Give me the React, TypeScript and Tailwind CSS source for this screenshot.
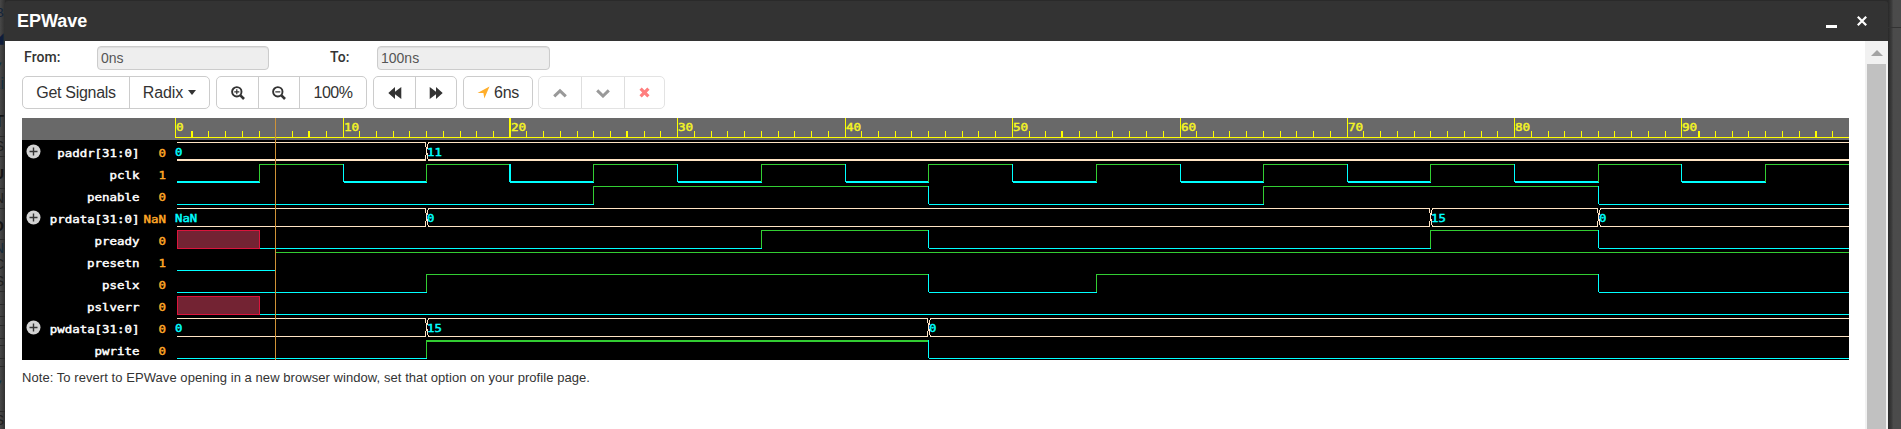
import type { ReactNode } from 'react';

const PX = 16.738;
const X0 = 153;
const WIDTH = 1827;
const snapped: Record<number, number> = { 1: 169, 8: 286, 10: 321, 20: 487, 27: 604, 53: 1039, 60: 1158 };
const wideTicks = [1, 8, 20, 27, 53, 91, 98];
const tx = (t: number) => snapped[t] ?? Math.round(X0 + t * PX);

type Seg = { from: number; to: number; v: string };
type Signal = { name: string; value: string; bus?: boolean; top: number; hh?: number; lh?: number; segs: Seg[] };

const s = (from: number, to: number, v: string): Seg => ({ from, to, v });
const clock = Array.from({ length: 20 }, (_, i) => s(i * 5, i * 5 + 5, i % 2 ? '1' : '0'));

const signals: Signal[] = [
  { name: 'paddr[31:0]', value: '0', bus: true, top: 24, lh: 2, segs: [s(0, 15, '0'), s(15, 101, '11')] },
  { name: 'pclk', value: '1', top: 46, lh: 2, segs: clock },
  { name: 'penable', value: '0', top: 68, segs: [s(0, 25, '0'), s(25, 45, '1'), s(45, 65, '0'), s(65, 85, '1'), s(85, 101, '0')] },
  { name: 'prdata[31:0]', value: 'NaN', bus: true, top: 90, segs: [s(0, 15, 'NaN'), s(15, 75, '0'), s(75, 85, '15'), s(85, 101, '0')] },
  { name: 'pready', value: '0', top: 112, segs: [s(0, 5, 'x'), s(5, 35, '0'), s(35, 45, '1'), s(45, 75, '0'), s(75, 85, '1'), s(85, 101, '0')] },
  { name: 'presetn', value: '1', top: 134, segs: [s(0, 6, '0'), s(6, 101, '1')] },
  { name: 'pselx', value: '0', top: 156, segs: [s(0, 15, '0'), s(15, 45, '1'), s(45, 55, '0'), s(55, 85, '1'), s(85, 101, '0')] },
  { name: 'pslverr', value: '0', top: 178, segs: [s(0, 5, 'x'), s(5, 101, '0')] },
  { name: 'pwdata[31:0]', value: '0', bus: true, top: 200, segs: [s(0, 15, '0'), s(15, 45, '15'), s(45, 101, '0')] },
  { name: 'pwrite', value: '0', top: 222, hh: 2, segs: [s(0, 15, '0'), s(15, 45, '1'), s(45, 101, '0')] },
];

function Label({ x, y, color, adv, end, children }: { x: number; y: number; color: string; adv: number; end?: boolean; children: string }) {
  const w = children.length * adv;
  return (
    <text x={end ? x - w : x} y={y} fill={color} stroke={color} strokeWidth={0.45} fontSize={11} textLength={w} lengthAdjust="spacingAndGlyphs">
      {children}
    </text>
  );
}

function Wave({ sig }: { sig: Signal }) {
  const lh = sig.lh ?? 1;
  const hh = sig.hh ?? 1;
  const low = sig.top + (lh === 2 ? 17 : 18);
  return (
    <g>
      {sig.segs.map((g, i) => {
        const x1 = i === 0 ? X0 + 2 : tx(g.from);
        const x2 = Math.min(tx(g.to), WIDTH);
        if (sig.bus) {
          const a = i === 0 ? x1 : x1 + 2;
          const b = x2 === WIDTH ? x2 : x2 - 1;
          return (
            <g key={i} fill="#ffe4c4">
              <rect x={a} y={sig.top} width={b - a} height={1} />
              <rect x={a} y={low} width={b - a} height={lh} />
              {i > 0 && (
                <g>
                  <rect x={x1 - 1} y={sig.top} width={1} height={5} />
                  <rect x={x1} y={sig.top + 5} width={1} height={8} />
                  <rect x={x1 - 1} y={sig.top + 13} width={1} height={6} />
                  <rect x={x1 + 2} y={sig.top} width={1} height={2} />
                  <rect x={x1 + 1} y={sig.top + 2} width={1} height={5} />
                  <rect x={x1 + 1} y={sig.top + 11} width={1} height={6} />
                  <rect x={x1 + 2} y={sig.top + 17} width={1} height={2} />
                </g>
              )}
              <Label x={i === 0 ? X0 : x1 + 1} y={sig.top + 14} color="#00ffff" adv={7.4}>{g.v}</Label>
            </g>
          );
        }
        if (g.v === 'x') {
          return (
            <g key={i}>
              <rect x={x1} y={sig.top} width={x2 - x1 + 1} height={19} fill="#dc143c" />
              <rect x={x1 + 1} y={sig.top + 1} width={x2 - x1 - 1} height={17} fill="#732333" />
            </g>
          );
        }
        const high = g.v === '1';
        const edge = i > 0 && sig.segs[i - 1].v !== 'x' && sig.name !== 'presetn';
        const after = i > 0 ? 1 : 0;
        return (
          <g key={i} fill={high ? '#32cd32' : '#00ffff'}>
            <rect x={x1 + after} y={high ? sig.top : low} width={x2 - x1 + 1 - after} height={high ? hh : lh} />
            {edge && <rect x={x1} y={sig.top} width={sig.name === 'pclk' && g.from === 20 ? 2 : 1} height={18} />}
          </g>
        );
      })}
    </g>
  );
}

function Waveform() {
  return (
    <svg width={WIDTH} height={242} className="block font-['DejaVu_Sans_Mono',monospace]" shapeRendering="crispEdges">
      <rect width={WIDTH} height={242} fill="#000" />
      <rect width={WIDTH} height={22} fill="#696969" />
      <rect x={X0} y={19} width={WIDTH - X0} height={1} fill="#ff0" />
      {Array.from({ length: 100 }, (_, i) => (
        <g key={i}>
          <rect x={tx(i)} y={i % 10 ? 13 : 0} width={wideTicks.includes(i) ? 2 : 1} height={i % 10 ? 6 : 20} fill="#ff0" />
          {i % 10 === 0 && <Label x={tx(i) + (i === 20 ? 2 : 1)} y={13} color="#f4f425" adv={7.6}>{String(i)}</Label>}
        </g>
      ))}
      {signals.map((sig) => (
        <g key={sig.name}>
          <Wave sig={sig} />
          {sig.bus && (
            <g shapeRendering="auto">
              <circle cx={11.5} cy={sig.top + 9.5} r={7} fill="#d3d3d3" />
              <path d={`M7.5 ${sig.top + 9.5}h8M11.5 ${sig.top + 5.5}v8`} stroke="#333" strokeWidth={1.4} />
            </g>
          )}
          <Label x={117.5} y={sig.top + 15} color="#fff" adv={7.48} end>{sig.name}</Label>
          <Label x={144} y={sig.top + 15} color="#ffa727" adv={7.48} end>{sig.value}</Label>
        </g>
      ))}
      <rect x={253} y={0} width={1} height={242} fill="#cf9236" />
    </svg>
  );
}

function Group({ children, className }: { children: ReactNode; className: string }) {
  return <div className={`flex h-[33px] divide-x overflow-hidden rounded-[5px] border ${className}`}>{children}</div>;
}

function Btn({ children, className }: { children: ReactNode; className: string }) {
  return <button type="button" className={`flex items-center justify-center ${className}`}>{children}</button>;
}

function Magnifier({ plus }: { plus?: boolean }) {
  return (
    <svg width="14" height="14" viewBox="0 0 14 14" fill="none" stroke="#333">
      <circle cx="5.8" cy="5.8" r="4.7" strokeWidth="1.9" />
      <path d="M9.4 9.4l3.6 3.6" strokeWidth="2.6" />
      <path d={plus ? 'M3.3 5.8h5M5.8 3.3v5' : 'M3.3 5.8h5'} strokeWidth="1.2" />
    </svg>
  );
}

function Rewind({ flip }: { flip?: boolean }) {
  return (
    <svg width="14" height="12" viewBox="0 0 14 12" className={flip ? '-scale-x-100' : ''}>
      <path d="M7 0v4.8L13.3 0v12L7 7.2V12L0.3 6z" fill="#333" />
    </svg>
  );
}

const behind = [
  { y: 5, t: 'B', c: 'text-[#14243c] text-[13px]' },
  { y: 30, t: '◢', c: 'text-[#101d3b] text-[15px]' },
  { y: 58, t: '▼', c: 'text-[#123447] text-[13px]' },
  { y: 76, t: 'Li', c: 'text-[#152f40] text-[16px]' },
  { y: 114, t: 'T', c: 'text-[#151515] text-[16px] font-bold' },
  { y: 138, t: 'S', c: 'text-[#202020] text-[14px]' },
  { y: 166, t: 'U', c: 'text-[#151515] text-[15px] font-bold' },
  { y: 190, t: 'N', c: 'text-[#202020] text-[14px]' },
  { y: 218, t: 'O', c: 'text-[#151515] text-[15px] font-bold' },
  { y: 240, t: 'N', c: 'text-[#152b3b] text-[14px]' },
  { y: 256, t: 'C', c: 'text-[#202020] text-[14px]' },
  { y: 273, t: 'S', c: 'text-[#202020] text-[14px]' },
  { y: 376, t: '▼', c: 'text-[#123447] text-[13px]' },
  { y: 412, t: 'S', c: 'text-[#202020] text-[14px]' },
];
const rules = [136, 156, 188, 208, 239, 291, 304, 316, 325, 338, 345, 358, 366, 411];

export default function App() {
  return (
    <div className="flex h-[429px] w-[1901px] overflow-hidden bg-[#4b4b4b] font-['Liberation_Sans',sans-serif] text-[#333]">
      <div className="relative w-[5px] shrink-0 overflow-hidden bg-linear-to-r from-[#484848] to-[#303030]">
        {rules.map((y) => <i key={y} className="absolute left-0 h-px w-full bg-[#2b2b2b]" style={{ top: y }} />)}
        {behind.map((b) => <span key={b.y} className={`absolute right-[1px] leading-[16px] ${b.c}`} style={{ top: b.y }}>{b.t}</span>)}
      </div>
      <div className="flex w-[1883px] shrink-0 flex-col bg-[#2a2a2a] pt-px">
        <header className="flex h-[40px] shrink-0 items-center justify-between rounded-t-[3px] bg-[#333] pr-[20px] pl-[12px] text-white">
          <h1 className="text-[18px] leading-[20px] font-bold">EPWave</h1>
          <div className="flex items-center gap-[19px]">
            <div className="mt-[11px] h-[3px] w-[11px] bg-white" />
            <svg width="12" height="12" viewBox="0 0 12 12"><path d="M1.8 1.8l8.4 8.4M10.2 1.8l-8.4 8.4" stroke="#fff" strokeWidth="2.2" /></svg>
          </div>
        </header>
        <div className="flex min-h-0 flex-1 bg-white">
          <main className="w-[1860px] shrink-0 pl-[17px]">
            <div className="flex h-[35px] pt-[5px] text-[14px]">
              <label className="w-[75px] pt-[1px] pl-[2px] font-['Roboto',sans-serif] font-medium tracking-[0.1px]">From:</label>
              <div className="h-[24px] w-[172px] rounded-[4px] border border-[#ccc] bg-[#eee] pt-px pl-[3px] text-[#555] shadow-[inset_0_1px_1px_rgba(0,0,0,0.075)]">0ns</div>
              <label className="w-[108px] pt-[1px] pl-[61px] font-['Roboto',sans-serif] font-medium tracking-[0.1px]">To:</label>
              <div className="h-[24px] w-[173px] rounded-[4px] border border-[#ccc] bg-[#eee] pt-px pl-[3px] text-[#555] shadow-[inset_0_1px_1px_rgba(0,0,0,0.075)]">100ns</div>
            </div>
            <div className="flex h-[42px] text-[16px]">
              <Group className="mr-[6px] w-[188px] divide-[#ccc] border-[#ccc]">
                <Btn className="w-[107px] tracking-[-0.3px]">Get Signals</Btn>
                <Btn className="flex-1 gap-[5px] tracking-[-0.1px]">Radix<span className="border-x-4 border-t-[5px] border-x-transparent border-t-[#333]" /></Btn>
              </Group>
              <Group className="mr-[6px] w-[151px] divide-[#ccc] border-[#ccc]">
                <Btn className="w-[42px]"><Magnifier plus /></Btn>
                <Btn className="w-[41px]"><Magnifier /></Btn>
                <Btn className="flex-1 tracking-[-0.5px]">100%</Btn>
              </Group>
              <Group className="mr-[6px] w-[84px] divide-[#ccc] border-[#ccc]">
                <Btn className="w-[42px]"><Rewind /></Btn>
                <Btn className="flex-1"><Rewind flip /></Btn>
              </Group>
              <Group className="mr-[5px] w-[70px] divide-[#ccc] border-[#ccc]">
                <Btn className="flex-1 gap-[4px] tracking-[-0.3px]">
                  <svg width="13" height="13" viewBox="0 0 13 13"><path d="M12.5 0.5L7.3 12.5L6.4 7.1H0.5z" fill="#ffae2b" /></svg>
                  6ns
                </Btn>
              </Group>
              <Group className="w-[127px] divide-[#dedede] border-[#e3e3e3]">
                <Btn className="w-[43px]"><svg width="14" height="10" viewBox="0 0 14 10"><path d="M1.2 8.4L7 2.8l5.8 5.6" fill="none" stroke="#999" strokeWidth="3" /></svg></Btn>
                <Btn className="w-[43px]"><svg width="14" height="10" viewBox="0 0 14 10"><path d="M1.2 2.4L7 8l5.8-5.6" fill="none" stroke="#999" strokeWidth="3" /></svg></Btn>
                <Btn className="flex-1"><svg width="11" height="11" viewBox="0 0 11 11"><path d="M1.6 1.6l7.8 7.8M9.4 1.6l-7.8 7.8" stroke="#ff7f7f" strokeWidth="3.2" /></svg></Btn>
              </Group>
            </div>
            <Waveform />
            <p className="pt-[8px] text-[13px] tracking-[0.06px]">Note: To revert to EPWave opening in a new browser window, set that option on your profile page.</p>
          </main>
          <div className="flex w-[23px] shrink-0 flex-col items-center bg-[#f1f1f1]">
            <div className="flex h-[23px] shrink-0 items-center justify-center">
              <span className="border-x-[6px] border-b-[6px] border-x-transparent border-b-[#a3a3a3]" />
            </div>
            <div className="w-[19px] flex-1 bg-[#c1c1c1]" />
          </div>
        </div>
      </div>
      <div className="flex w-[13px] flex-col bg-linear-to-r from-[#292929] from-0% via-[#3d3d3d] via-30% to-[#4b4b4b] to-40%">
        <div className="h-[28px] border-b border-[#333]" />
      </div>
    </div>
  );
}
